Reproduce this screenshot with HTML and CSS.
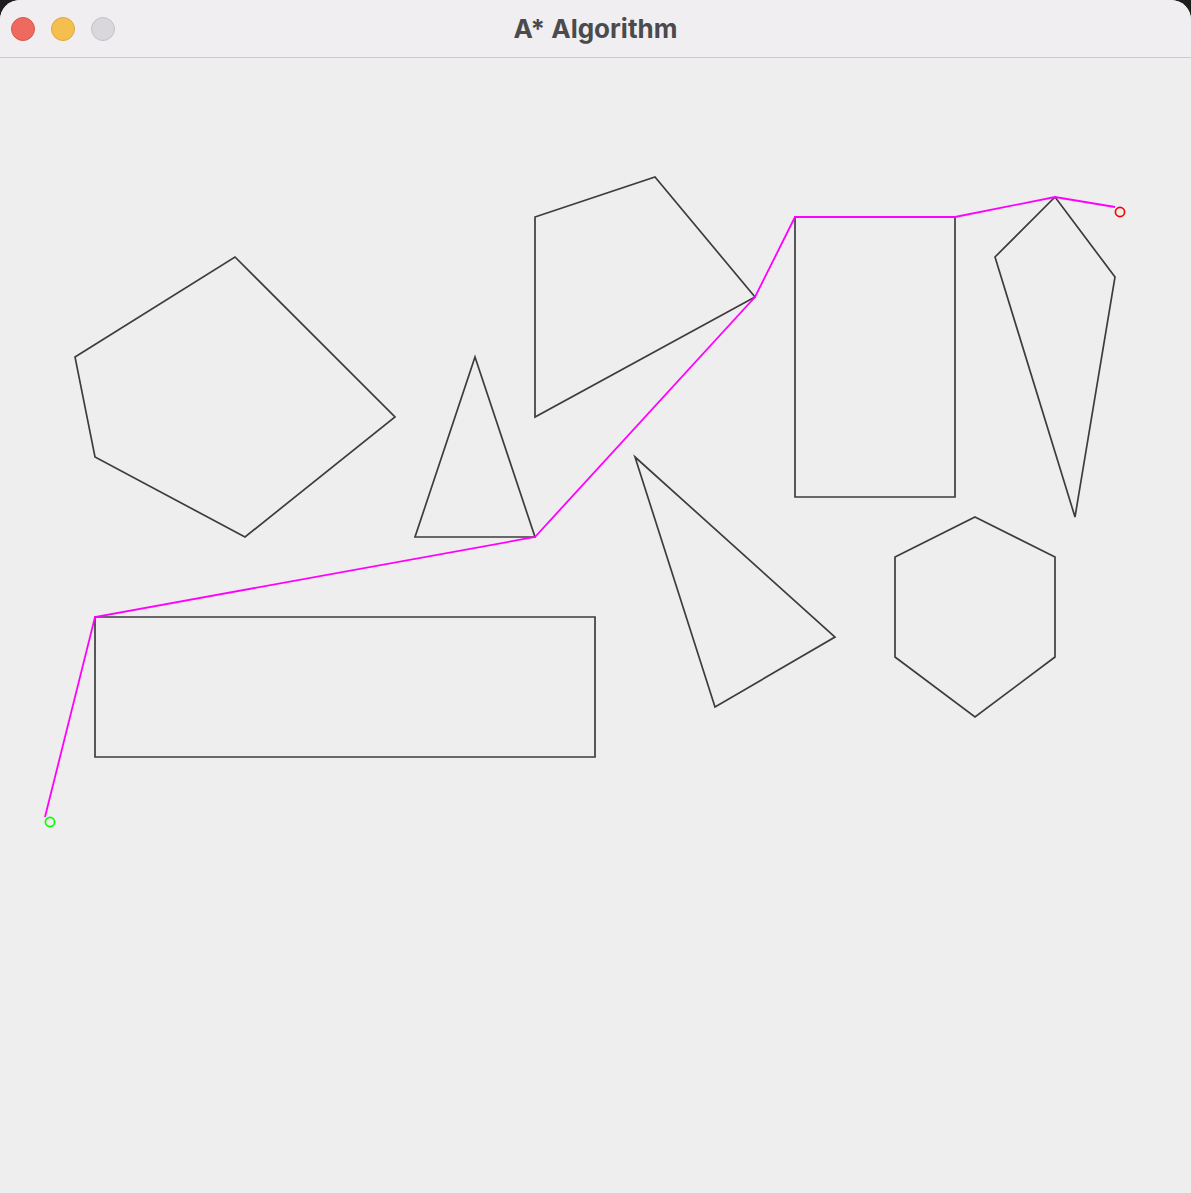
FILE: index.html
```html
<!DOCTYPE html>
<html>
<head>
<meta charset="utf-8">
<link rel="stylesheet" href="styles.css">
</head>
<body>
<div class="window">
  <div class="titlebar">
    <div class="lights">
      <span class="light red"></span>
      <span class="light yellow"></span>
      <span class="light gray"></span>
    </div>
    <div class="title">A* Algorithm</div>
    <div class="spacer"></div>
  </div>
  <div class="content">
    <svg class="canvas" width="1191" height="1135" viewBox="0 58 1191 1135" xmlns="http://www.w3.org/2000/svg">
      <g class="shapes" fill="none" stroke="#3d3d3d" stroke-width="1.7" stroke-linejoin="miter">
        <polygon points="75,357 235,257 395,417 245,537 95,457"/>
        <polygon points="475,357 535,537 415,537"/>
        <polygon points="535,217 655,177 755,297 535,417"/>
        <polygon points="795,217 955,217 955,497 795,497"/>
        <polygon points="995,257 1055,197 1115,277 1075,517"/>
        <polygon points="635,457 835,637 715,707"/>
        <polygon points="975,517 1055,557 1055,657 975,717 895,657 895,557"/>
        <polygon points="95,617 595,617 595,757 95,757"/>
      </g>
      <polyline fill="none" stroke="#ff00ff" stroke-width="1.8" points="45,817 95,617 535,537 755,297 795,217 955,217 1055,197 1115,207"/>
      <circle cx="50" cy="822" r="4.6" fill="none" stroke="#00ff00" stroke-width="1.7"/>
      <circle cx="1120" cy="212" r="4.6" fill="none" stroke="#ff0000" stroke-width="1.7"/>
    </svg>
  </div>
</div>
</body>
</html>
```
FILE: styles.css
```css
html, body {
  margin: 0;
  padding: 0;
  background: #1e1e1e;
}
.window {
  width: 1191px;
  height: 1193px;
  border-radius: 20px 20px 0 0;
  overflow: hidden;
  background: #eeeeee;
  display: flex;
  flex-direction: column;
}
.titlebar {
  height: 57px;
  flex: 0 0 57px;
  background: #f0eef1;
  border-bottom: 1px solid #cbc9cc;
  display: grid;
  grid-template-columns: 1fr auto 1fr;
  align-items: center;
}
.lights {
  display: flex;
  gap: 16px;
  padding-left: 11px;
  padding-top: 1px;
}
.light {
  width: 22px;
  height: 22px;
  border-radius: 50%;
  border: 1px solid transparent;
}
.red { background: #ee6a5f; border-color: #d9554b; }
.yellow { background: #f5bf4f; border-color: #dea63a; }
.gray { background: #d9d7db; border-color: #c4c2c6; }
.title {
  font-family: "Inter", "Noto Sans", sans-serif;
  font-weight: 700;
  font-size: 26px;
  color: #4b4a4c;
}
.content {
  flex: 1;
  background: #eeeeee;
}
.canvas {
  display: block;
}
```
